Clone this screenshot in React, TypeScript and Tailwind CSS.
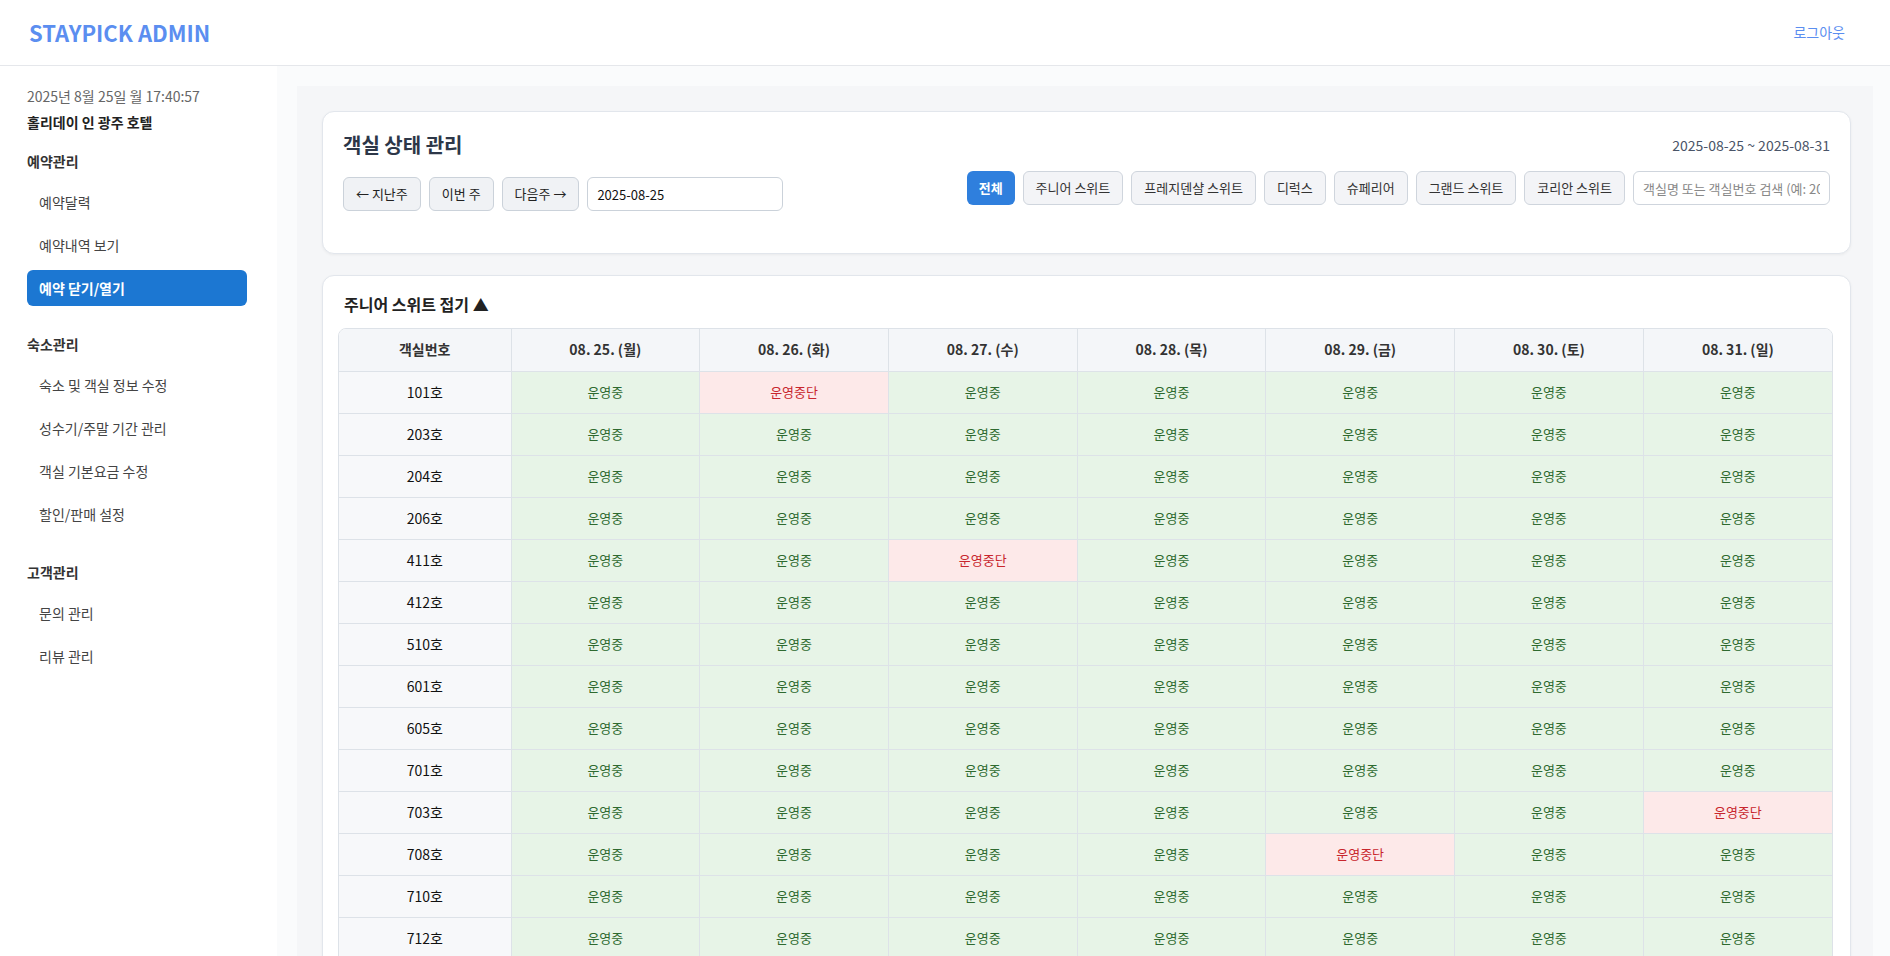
import React from 'react';

const days = ['08. 25. (월)', '08. 26. (화)', '08. 27. (수)', '08. 28. (목)', '08. 29. (금)', '08. 30. (토)', '08. 31. (일)'];

// room number -> index of day that is closed
const rooms: [string, number | null][] = [
  ['101호', 1],
  ['203호', null],
  ['204호', null],
  ['206호', null],
  ['411호', 2],
  ['412호', null],
  ['510호', null],
  ['601호', null],
  ['605호', null],
  ['701호', null],
  ['703호', 6],
  ['708호', 4],
  ['710호', null],
  ['712호', null],
];

const filters = ['주니어 스위트', '프레지덴샬 스위트', '디럭스', '슈페리어', '그랜드 스위트', '코리안 스위트'];

const SideLink: React.FC<{ label: string; active?: boolean }> = ({ label, active }) =>
  active ? (
    <div className="h-[36px] flex items-center px-3 rounded-md bg-[#1c77d2] text-white text-[14px] font-bold">{label}</div>
  ) : (
    <div className="h-[36px] flex items-center px-3 text-[14px] text-[#444]">{label}</div>
  );

const App: React.FC = () => {
  return (
    <div className="min-h-screen bg-[#fafbfc] font-['Noto_Sans_CJK_KR','Noto_Sans',sans-serif] text-[#222]">
      {/* Header */}
      <header className="h-[66px] bg-white border-b border-[#e5e7eb] flex items-center justify-between pl-[29px] pr-[45px]">
        <h1 className="text-[22px] font-bold text-[#5b8ef0]">STAYPICK ADMIN</h1>
        <button className="text-[14px] text-[#5b8ef0]">로그아웃</button>
      </header>

      <div className="flex">
        {/* Sidebar */}
        <aside className="w-[277px] shrink-0 bg-white min-h-[890px] pl-[27px] pr-[30px] pt-[20px]">
          <div className="text-[14px] text-[#666]">2025년 8월 25일 월 17:40:57</div>
          <div className="text-[14px] font-bold text-[#222] mt-[5px]">홀리데이 인 광주 호텔</div>

          <div className="text-[14px] font-bold text-[#333] mt-[18px] mb-[12px]">예약관리</div>
          <div className="flex flex-col gap-[7px]">
            <SideLink label="예약달력" />
            <SideLink label="예약내역 보기" />
            <SideLink label="예약 닫기/열기" active />
          </div>

          <div className="text-[14px] font-bold text-[#333] mt-[28px] mb-[12px]">숙소관리</div>
          <div className="flex flex-col gap-[7px]">
            <SideLink label="숙소 및 객실 정보 수정" />
            <SideLink label="성수기/주말 기간 관리" />
            <SideLink label="객실 기본요금 수정" />
            <SideLink label="할인/판매 설정" />
          </div>

          <div className="text-[14px] font-bold text-[#333] mt-[30px] mb-[12px]">고객관리</div>
          <div className="flex flex-col gap-[7px]">
            <SideLink label="문의 관리" />
            <SideLink label="리뷰 관리" />
          </div>
        </aside>

        {/* Main */}
        <main className="flex-1 pl-[20px] pr-[17px] pt-[20px]">
          <div className="bg-[#f5f6f8] pl-[25px] pr-[22px] pt-[25px] pb-[20px] flex flex-col gap-[21px]">
            {/* Controls card */}
            <section className="bg-white border border-[#e2e6ec] rounded-[12px] shadow-[0_1px_3px_rgba(0,0,0,0.05)] px-[20px] pt-[18px] pb-[42px]">
              <div className="flex items-center justify-between">
                <h2 className="text-[20px] font-bold text-[#2d3748]">객실 상태 관리</h2>
                <span className="text-[14px] text-[#4a5568]">2025-08-25 ~ 2025-08-31</span>
              </div>
              <div className="flex items-start justify-between mt-[11px]">
                <div className="flex items-center gap-[8px] mt-[6px]">
                  <button className="h-[34px] px-[12px] rounded-[6px] border border-[#cbd2da] bg-[#f0f2f5] text-[13px] text-[#222]">← 지난주</button>
                  <button className="h-[34px] px-[12px] rounded-[6px] border border-[#cbd2da] bg-[#f0f2f5] text-[13px] text-[#222]">이번 주</button>
                  <button className="h-[34px] px-[12px] rounded-[6px] border border-[#cbd2da] bg-[#f0f2f5] text-[13px] text-[#222]">다음주 →</button>
                  <input
                    readOnly
                    value="2025-08-25"
                    className="h-[34px] w-[196px] px-[9px] rounded-[6px] border border-[#cbd2da] bg-white text-[13px] text-[#111] outline-none"
                  />
                </div>
                <div className="flex items-center gap-[8px]">
                  <button className="h-[34px] px-[12px] rounded-[6px] bg-[#2f7fdd] text-white text-[13px] font-bold">전체</button>
                  {filters.map((f) => (
                    <button key={f} className="h-[34px] px-[12px] rounded-[6px] border border-[#cfd5dd] bg-[#f3f4f7] text-[13px] text-[#333]">
                      {f}
                    </button>
                  ))}
                  <input
                    placeholder="객실명 또는 객실번호 검색 (예: 203호)"
                    className="h-[34px] w-[197px] px-[9px] rounded-[6px] border border-[#cfd5dd] bg-white text-[13px] placeholder:text-[#888] outline-none"
                  />
                </div>
              </div>
            </section>

            {/* Room table card */}
            <section className="bg-white border border-[#e2e6ec] rounded-[12px] shadow-[0_1px_3px_rgba(0,0,0,0.05)] pl-[15px] pr-[17px] pt-[16px] pb-[20px]">
              <h3 className="text-[16px] font-bold text-[#222] pl-[6px] mb-[12px]">주니어 스위트 접기 ▲</h3>
              <div className="border border-[#dde2e8] rounded-t-[8px] overflow-hidden">
                <table className="w-full border-collapse table-fixed">
                  <colgroup>
                    <col className="w-[172px]" />
                    {days.map((d) => (
                      <col key={d} />
                    ))}
                  </colgroup>
                  <thead>
                    <tr className="h-[42px] bg-[#f4f6f9]">
                      <th className="text-[14px] font-bold text-[#333] border-r border-b border-[#dde2e8]">객실번호</th>
                      {days.map((d) => (
                        <th key={d} className="text-[14px] font-bold text-[#333] border-r border-b border-[#dde2e8] last:border-r-0">
                          {d}
                        </th>
                      ))}
                    </tr>
                  </thead>
                  <tbody>
                    {rooms.map(([room, closed]) => (
                      <tr key={room} className="h-[42px]">
                        <td className="bg-[#f7f8fa] text-center text-[14px] font-normal text-[#111] border-r border-b border-[#dde2e8]">{room}</td>
                        {days.map((d, i) =>
                          i === closed ? (
                            <td key={d} className="bg-[#fde9e9] text-center text-[13px] text-[#c8262d] border-r border-b border-[#dde2e8] last:border-r-0">
                              운영중단
                            </td>
                          ) : (
                            <td key={d} className="bg-[#e7f4e7] text-center text-[13px] text-[#2e6a2f] border-r border-b border-[#dde2e8] last:border-r-0">
                              운영중
                            </td>
                          )
                        )}
                      </tr>
                    ))}
                  </tbody>
                </table>
              </div>
            </section>
          </div>
        </main>
      </div>
    </div>
  );
};

export default App;
